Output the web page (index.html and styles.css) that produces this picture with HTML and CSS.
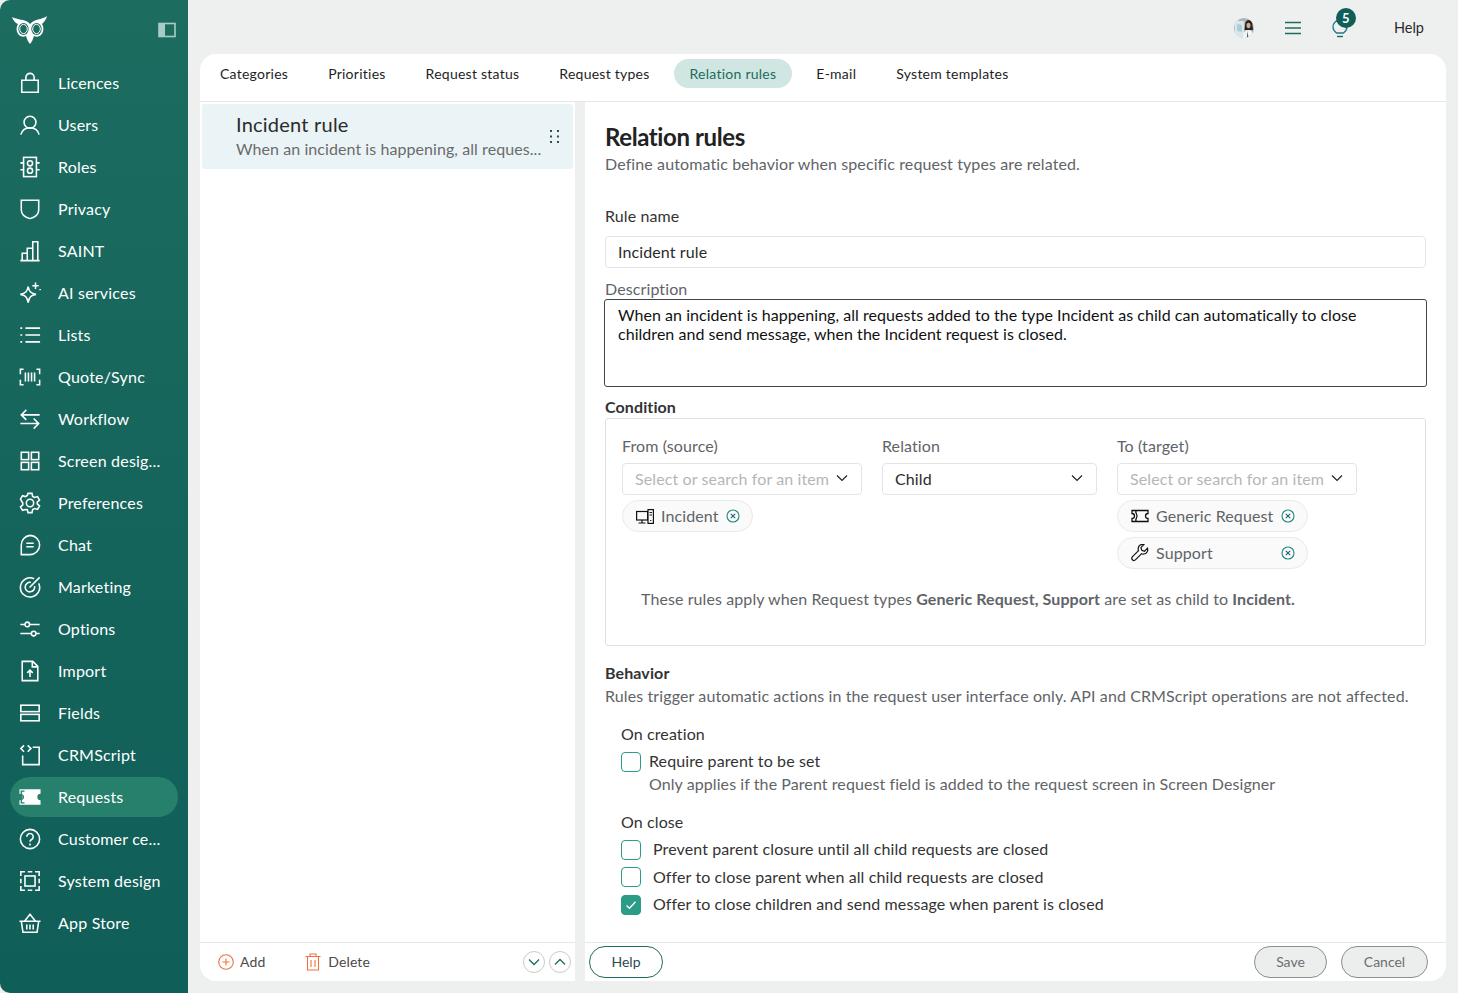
FILE: index.html
```html
<!DOCTYPE html>
<html lang="en">
<head>
  <meta charset="UTF-8">
  <title>Relation rules</title>
  <link rel="stylesheet" href="styles.css">
</head>
<body>
  <div class="app">
    <aside class="sidebar">
      <div class="brand">
        <svg class="owl" viewBox="0 0 36 30" width="36" height="30">
          <path d="M0 2 C6 5 10 4 14 6 C16 7 17 8 18 9 C19 8 20 7 22 6 C26 4 31 4 35 1 C34 5 32 7 30 9 C32 12 32 17 29 20 C27 22 24 22 22 21 C21 24 20 27 18 29 C16 27 15 24 14 21 C12 22 9 22 7 20 C4 17 4 12 6 9 C3 8 1 5 0 2 Z" fill="#fff"/>
          <ellipse cx="11.5" cy="14" rx="5.2" ry="6" fill="#1b6b5e"/>
          <ellipse cx="24.5" cy="14" rx="5.2" ry="6" fill="#1b6b5e"/>
          <ellipse cx="11.5" cy="14" rx="3.8" ry="4.6" fill="none" stroke="#fff" stroke-width="1"/>
          <ellipse cx="24.5" cy="14" rx="3.8" ry="4.6" fill="none" stroke="#fff" stroke-width="1"/>
        </svg>
        <svg class="collapse" viewBox="0 0 18 16" width="18" height="16">
          <rect x="1" y="1.5" width="16" height="13" fill="none" stroke="#a9cdc6" stroke-width="1.6"/>
          <rect x="1" y="1.5" width="6" height="13" fill="#a9cdc6"/>
        </svg>
      </div>
      <nav class="nav">
        <a class="nav-item">
          <svg class="nav-icon" viewBox="0 0 24 24"><path d="M3 9h18v13H3zM7.500 9V6a4.500 4.500 0 0 1 9 0v3"/></svg>
          <span>Licences</span>
        </a>
        <a class="nav-item">
          <svg class="nav-icon" viewBox="0 0 24 24"><circle cx="12" cy="9" r="6.500"/><path d="M2 22.500c1.500-5 5-7.500 10-7.500s8.500 2.500 10 7.500"/></svg>
          <span>Users</span>
        </a>
        <a class="nav-item">
          <svg class="nav-icon" viewBox="0 0 24 24"><rect x="5" y="1.500" width="14" height="21"/><circle cx="12" cy="8" r="2.800"/><circle cx="12" cy="16" r="2.800"/><path d="M1.500 7.500H5M1.500 15H5M19 7.500h3.500M19 15h3.500"/></svg>
          <span>Roles</span>
        </a>
        <a class="nav-item">
          <svg class="nav-icon" viewBox="0 0 24 24"><path d="M2.500 2.500h19V13c0 4.500-4.500 8-9.500 9.500C7 21 2.500 17.500 2.500 13z"/></svg>
          <span>Privacy</span>
        </a>
        <a class="nav-item">
          <svg class="nav-icon" viewBox="0 0 24 24"><path d="M1.500 22.500h21M3.500 22.500v-8h5.500v8M9 22.500V9h6v13.500M15 22.500V2h5.500v20.500"/></svg>
          <span>SAINT</span>
        </a>
        <a class="nav-item">
          <svg class="nav-icon" viewBox="0 0 24 24"><path d="M10 5c1 5.500 3 7.500 8.500 8.500-5.500 1-7.500 3-8.500 9-1-6-3-8-8.500-9 5.500-1 7.500-3 8.500-8.500z"/><path d="M18 .5v7M14.500 4h7M23 7.500v1.500"/></svg>
          <span>AI services</span>
        </a>
        <a class="nav-item">
          <svg class="nav-icon" viewBox="0 0 24 24"><path d="M7 4.500h16M7 12h16M7 19.500h16M1.500 4.500h2M1.500 12h2M1.500 19.500h2"/></svg>
          <span>Lists</span>
        </a>
        <a class="nav-item">
          <svg class="nav-icon" viewBox="0 0 24 24"><path d="M5 3.500H1.500V9M19 3.500h3.500V9M5 20.500H1.500V15M19 20.500h3.500V15M7 7v10M10.300 7v10M13.700 7v10M17 7v10"/></svg>
          <span>Quote/Sync</span>
        </a>
        <a class="nav-item">
          <svg class="nav-icon" viewBox="0 0 24 24"><path d="M22.500 7.500H3M8 2 2.500 7.500 8 13M1.500 17h20M16 11.500l5.500 5.500-5.500 5.500"/></svg>
          <span>Workflow</span>
        </a>
        <a class="nav-item">
          <svg class="nav-icon" viewBox="0 0 24 24"><rect x="2.500" y="2.500" width="8" height="8"/><rect x="13.500" y="2.500" width="8" height="8"/><rect x="2.500" y="13.500" width="8" height="8"/><rect x="13.500" y="13.500" width="8" height="8"/></svg>
          <span>Screen desig...</span>
        </a>
        <a class="nav-item">
          <svg class="nav-icon" viewBox="0 0 24 24"><circle cx="12" cy="12" r="4"/><path d="M9.800 1.500h4.400l.7 3.300 2.100 1.200 3.200-1 2.200 3.800-2.500 2.200v2l2.500 2.200-2.200 3.800-3.200-1-2.100 1.200-.7 3.300H9.800l-.7-3.300L7 19l-3.200 1-2.200-3.800 2.500-2.200v-2L1.600 7.800 3.800 4 7 5l2.100-1.200z"/></svg>
          <span>Preferences</span>
        </a>
        <a class="nav-item">
          <svg class="nav-icon" viewBox="0 0 24 24"><path d="M12 1.500a10.500 10.500 0 1 1 0 21H2.500V12A10.500 10.500 0 0 1 12 1.500zM8 10h8M8 14h8"/></svg>
          <span>Chat</span>
        </a>
        <a class="nav-item">
          <svg class="nav-icon" viewBox="0 0 24 24"><path d="M21.500 8a10.500 10.500 0 1 1-5-5"/><path d="M17 11a5.200 5.200 0 1 1-4-4"/><path d="M11.500 12.500 22.500 1.500"/></svg>
          <span>Marketing</span>
        </a>
        <a class="nav-item">
          <svg class="nav-icon" viewBox="0 0 24 24"><path d="M1.500 7h5M11.500 7h11M1.500 17h12M18.500 17h4"/><circle cx="9" cy="7" r="2.500"/><circle cx="16" cy="17" r="2.500"/></svg>
          <span>Options</span>
        </a>
        <a class="nav-item">
          <svg class="nav-icon" viewBox="0 0 24 24"><path d="M3.500 1.500h11.500l5.500 5.500v15.500h-17zM14.500 1.500v6h6M12 18.500v-7M9 14l3-3 3 3"/></svg>
          <span>Import</span>
        </a>
        <a class="nav-item">
          <svg class="nav-icon" viewBox="0 0 24 24"><rect x="2" y="3.500" width="20" height="7"/><rect x="2" y="13.500" width="20" height="7"/></svg>
          <span>Fields</span>
        </a>
        <a class="nav-item">
          <svg class="nav-icon" viewBox="0 0 24 24"><path d="M15 3.500h7v19H4v-10M5.500 1.500 2 5l3.500 3.500M9.500 1.500 13 5 9.500 8.500"/></svg>
          <span>CRMScript</span>
        </a>
        <a class="nav-item active">
          <svg class="nav-icon" viewBox="0 0 24 24"><path class="solid" d="M.5 3.500h23v5a3.500 3.500 0 0 0 0 7v5H.5v-5a3.500 3.500 0 0 0 0-7z"/><path class="notch" d="M6 5.500H2.500V9a3.500 3.500 0 0 1 2.500 3 3.500 3.500 0 0 1-2.500 3v3.500H6"/></svg>
          <span>Requests</span>
        </a>
        <a class="nav-item">
          <svg class="nav-icon" viewBox="0 0 24 24"><circle cx="12" cy="12" r="10.500"/><path d="M8.500 9.500a3.500 3.500 0 1 1 5.300 3c-1.200.7-1.800 1.300-1.800 2.500M12 17v2"/></svg>
          <span>Customer ce...</span>
        </a>
        <a class="nav-item">
          <svg class="nav-icon" viewBox="0 0 24 24"><path d="M2 6.500V2h4.500M9.500 2h5M17.500 2H22v4.500M22 9.500v5M22 17.500V22h-4.500M14.500 22h-5M6.500 22H2v-4.500M2 14.500v-5"/><rect x="6.500" y="6.500" width="11" height="11"/></svg>
          <span>System design</span>
        </a>
        <a class="nav-item">
          <svg class="nav-icon" viewBox="0 0 24 24"><path d="M.5 10h23M2.500 10l1.800 12h15.400L21.500 10M6 10l6-7.500 6 7.500M8.500 13.500V19M12 13.500V19M15.500 13.500V19"/></svg>
          <span>App Store</span>
        </a>
      </nav>
    </aside>

    <main class="main">
      <header class="topbar">
        <svg class="avatar" viewBox="0 0 20 20" width="20" height="20">
          <clipPath id="avatar-clip"><circle cx="10" cy="10" r="10"/></clipPath>
          <g clip-path="url(#avatar-clip)">
            <rect width="20" height="20" fill="#aab6b8"/>
            <path d="M1 3h9v17H1z" fill="#dbe7ea"/>
            <path d="M3 6l5 1v7l-5-1z" fill="#a8cfd8"/>
            <path d="M11 8c0-4 1.200-6 3.700-6s3.800 2 3.800 6l.5 4h-8.500z" fill="#2a2120"/>
            <ellipse cx="14.500" cy="7.500" rx="2" ry="2.800" fill="#d3a98f"/>
            <path d="M9 20c0-5 1.500-8 5.500-8s4 3 4 8z" fill="#f4f6f6"/>
            <path d="M13.500 13l1 7h-1.500z" fill="#3b4a50"/>
          </g>
        </svg>
        <svg class="menu-icon" viewBox="0 0 16 14" width="16" height="14">
          <path d="M0 1.500h16M0 7h16M0 12.500h16" stroke="#1d6c60" stroke-width="1.300" fill="none"/>
        </svg>
        <div class="bulb">
          <svg viewBox="0 0 16 20" width="16" height="20">
            <path d="M4.500 14C2 12 1 10 1 8a7 7 0 0 1 14 0c0 2-1 4-3.500 6z" fill="none" stroke="#1d7a8c" stroke-width="1.300"/>
            <path d="M5 17.500h6" stroke="#1d6c60" stroke-width="1.400"/>
          </svg>
          <span class="badge">5</span>
        </div>
        <a class="top-help">Help</a>
      </header>

      <section class="card">
        <div class="tabs">
          <a class="tab">Categories</a>
          <a class="tab">Priorities</a>
          <a class="tab">Request status</a>
          <a class="tab">Request types</a>
          <a class="tab active">Relation rules</a>
          <a class="tab">E-mail</a>
          <a class="tab">System templates</a>
        </div>

        <div class="panes">
          <div class="pane list-pane">
            <div class="pane-body">
              <div class="rule-item">
                <div class="rule-text">
                  <div class="rule-title">Incident rule</div>
                  <div class="rule-sub">When an incident is happening, all reques...</div>
                </div>
                <svg class="drag" viewBox="0 0 9 13" width="9" height="13">
                  <g fill="#3c4a4f">
                    <rect x="0" y="0" width="2" height="2"/><rect x="7" y="0" width="2" height="2"/>
                    <rect x="0" y="5.500" width="2" height="2"/><rect x="7" y="5.500" width="2" height="2"/>
                    <rect x="0" y="11" width="2" height="2"/><rect x="7" y="11" width="2" height="2"/>
                  </g>
                </svg>
              </div>
            </div>
            <div class="pane-footer list-footer">
              <a class="tool">
                <svg viewBox="0 0 16 16" width="16" height="16"><circle cx="8" cy="8" r="7.300" fill="none" stroke="#f0703a" stroke-width="1.100"/><path d="M8 4.500v7M4.500 8h7" stroke="#f0703a" stroke-width="1.100"/></svg>
                <span>Add</span>
              </a>
              <a class="tool tool-delete">
                <svg viewBox="0 0 16 18" width="16" height="18"><path d="M.5 3.500h15M2.500 3.500v13.500h11V3.500M5 3.500V1h6v2.500M6 7v7M10 7v7" fill="none" stroke="#f0703a" stroke-width="1.100"/></svg>
                <span>Delete</span>
              </a>
              <div class="arrows">
                <button class="round-btn"><svg viewBox="0 0 12 8" width="12" height="8"><path d="M1 1.500l5 5 5-5" fill="none" stroke="#1d6c60" stroke-width="1.300"/></svg></button>
                <button class="round-btn"><svg viewBox="0 0 12 8" width="12" height="8"><path d="M1 6.500l5-5 5 5" fill="none" stroke="#1d6c60" stroke-width="1.300"/></svg></button>
              </div>
            </div>
          </div>

          <div class="pane form-pane">
            <div class="pane-body form-body">
              <h1 class="page-title">Relation rules</h1>
              <p class="page-sub">Define automatic behavior when specific request types are related.</p>

              <label class="field-label rule-label">Rule name</label>
              <div class="input">Incident rule</div>

              <label class="field-label desc-label">Description</label>
              <div class="textarea">When an incident is happening, all requests added to the type Incident as child can automatically to close children and send message, when the Incident request is closed.</div>

              <div class="section-label">Condition</div>
              <div class="condition">
                <div class="cond-col col-from">
                  <div class="cond-label">From (source)</div>
                  <div class="select placeholder">Select or search for an item
                    <svg class="chev" viewBox="0 0 12 8" width="12" height="8"><path d="M1 1.500l5 5 5-5" fill="none" stroke="#222" stroke-width="1.200"/></svg>
                  </div>
                  <div class="chip chip-short">
                    <svg viewBox="0 0 18 15" width="18" height="15"><g fill="none" stroke="#111" stroke-width="1.200"><rect x=".6" y="2.500" width="11" height="8.500"/><path d="M2.500 14h7M6 11v3"/><rect x="12" y=".6" width="5.400" height="13.800" fill="#fafafa"/><path d="M13.500 3.500h2.500M13.500 6h2.500M14.700 11v1"/></g></svg>
                    <span>Incident</span>
                    <svg class="chip-x" viewBox="0 0 14 14" width="14" height="14"><circle cx="7" cy="7" r="6" fill="none" stroke="#1f8a7c" stroke-width="1.100"/><path d="M4.800 4.800l4.400 4.400M9.200 4.800l-4.400 4.400" stroke="#1f5f7a" stroke-width="1.100"/></svg>
                  </div>
                </div>
                <div class="cond-col col-rel">
                  <div class="cond-label">Relation</div>
                  <div class="select">Child
                    <svg class="chev" viewBox="0 0 12 8" width="12" height="8"><path d="M1 1.500l5 5 5-5" fill="none" stroke="#222" stroke-width="1.200"/></svg>
                  </div>
                </div>
                <div class="cond-col col-to">
                  <div class="cond-label">To (target)</div>
                  <div class="select placeholder">Select or search for an item
                    <svg class="chev" viewBox="0 0 12 8" width="12" height="8"><path d="M1 1.500l5 5 5-5" fill="none" stroke="#222" stroke-width="1.200"/></svg>
                  </div>
                  <div class="chip chip-wide">
                    <svg viewBox="0 0 18 14" width="18" height="14"><path d="M1 1.500h16v3a2.500 2.500 0 0 0 0 5v3H1v-3a2.500 2.500 0 0 0 0-5zM5.500 1.500c-1 1-1 2-.2 3 .9 1.500.9 3.500 0 5-.8 1-.8 2 .2 3" fill="none" stroke="#111" stroke-width="1.300"/></svg>
                    <span>Generic Request</span>
                    <svg class="chip-x" viewBox="0 0 14 14" width="14" height="14"><circle cx="7" cy="7" r="6" fill="none" stroke="#1f8a7c" stroke-width="1.100"/><path d="M4.800 4.800l4.400 4.400M9.200 4.800l-4.400 4.400" stroke="#1f5f7a" stroke-width="1.100"/></svg>
                  </div>
                  <div class="chip chip-wide">
                    <svg viewBox="0 0 18 18" width="18" height="18"><path d="M16.500 4.200l-3 3-2.700-.9-.9-2.700 3-3c-2.500-.8-5.500.8-5.700 3.700-.1.900 0 1.600.3 2.300L1.300 12.800a2.200 2.200 0 0 0 3.100 3.100L10.600 9.700c.7.300 1.500.4 2.300.3 2.900-.2 4.400-3.200 3.600-5.800z" fill="none" stroke="#111" stroke-width="1.200"/></svg>
                    <span>Support</span>
                    <svg class="chip-x" viewBox="0 0 14 14" width="14" height="14"><circle cx="7" cy="7" r="6" fill="none" stroke="#1f8a7c" stroke-width="1.100"/><path d="M4.800 4.800l4.400 4.400M9.200 4.800l-4.400 4.400" stroke="#1f5f7a" stroke-width="1.100"/></svg>
                  </div>
                </div>
                <p class="cond-note">These rules apply when Request types <b>Generic Request, Support</b> are set as child to <b>Incident.</b></p>
              </div>

              <div class="section-label behavior-label">Behavior</div>
              <p class="behavior-sub">Rules trigger automatic actions in the request user interface only. API and CRMScript operations are not affected.</p>

              <div class="group-label first-group">On creation</div>
              <div class="check-row require-row">
                <span class="checkbox"></span>
                <span class="check-text">Require parent to be set</span>
              </div>
              <p class="check-help">Only applies if the Parent request field is added to the request screen in Screen Designer</p>

              <div class="group-label close-group">On close</div>
              <div class="check-row wide-row">
                <span class="checkbox"></span>
                <span class="check-text">Prevent parent closure until all child requests are closed</span>
              </div>
              <div class="check-row wide-row">
                <span class="checkbox"></span>
                <span class="check-text">Offer to close parent when all child requests are closed</span>
              </div>
              <div class="check-row wide-row">
                <span class="checkbox checked">
                  <svg viewBox="0 0 12 10" width="12" height="10"><path d="M1.500 5.500l3 2.800 6-6.500" fill="none" stroke="#fff" stroke-width="1.300"/></svg>
                </span>
                <span class="check-text">Offer to close children and send message when parent is closed</span>
              </div>
            </div>
            <div class="pane-footer form-footer">
              <button class="btn btn-help">Help</button>
              <div class="footer-right">
                <button class="btn btn-muted btn-save">Save</button>
                <button class="btn btn-muted btn-cancel">Cancel</button>
              </div>
            </div>
          </div>
        </div>
      </section>
    </main>
  </div>
</body>
</html>
```

FILE: styles.css
```css
* {
  box-sizing: border-box;
}

html, body {
  height: 100%;
}

body {
  margin: 0;
  font-family: Lato, "Open Sans", sans-serif;
  font-size: 16px;
  letter-spacing: .11px;
  color: #2b2b2b;
  background-color: #eef0ef;
  overflow: hidden;
}

a {
  color: inherit;
  text-decoration: none;
}

p, h1 {
  margin: 0;
}

.app {
  display: flex;
  height: 993px;
}

/* sidebar */
.sidebar {
  width: 188px;
  flex-shrink: 0;
  padding: 15px 10px 0;
  background: linear-gradient(180deg, #1c6c60 0%, #0f5e58 100%);
  border-radius: 10px 0 0 10px;
}

.brand {
  display: flex;
  justify-content: space-between;
  align-items: center;
  height: 30px;
  margin-bottom: 18px;
  padding: 0 2px;
}

.nav {
  display: flex;
  flex-direction: column;
  gap: 2px;
}

.nav-item {
  display: flex;
  align-items: center;
  gap: 17px;
  height: 40px;
  padding-left: 9px;
  border-radius: 20px;
  color: #fff;
  font-size: 16px;
  letter-spacing: .2px;
  white-space: nowrap;
}

.nav-item span {
  padding-bottom: 2px;
}

.nav-item.active {
  background-color: #26806c;
}

.nav-icon {
  width: 22px;
  height: 22px;
  flex-shrink: 0;
  overflow: visible;
  fill: none;
  stroke: #fff;
  stroke-width: 1.700;
}

.nav-icon .solid {
  fill: #fff;
  stroke: none;
}

.nav-icon .notch {
  stroke: #26806c;
  stroke-width: 1.400;
}

/* top bar */
.main {
  flex: 1;
  display: flex;
  flex-direction: column;
  min-width: 0;
  padding: 0 12px 12px;
}

.topbar {
  display: flex;
  align-items: center;
  justify-content: flex-end;
  height: 54px;
  flex-shrink: 0;
  padding-right: 22px;
}

.avatar {
  margin: 2px 31px 0 0;
}

.menu-icon {
  margin: 2px 31px 0 0;
}

.bulb {
  position: relative;
  width: 16px;
  height: 20px;
  margin: 4px 46px 0 0;
}

.badge {
  position: absolute;
  top: -11px;
  left: 4px;
  width: 20px;
  height: 20px;
  border-radius: 50%;
  background-color: #0f5e58;
  color: #fff;
  font-size: 13px;
  font-weight: 700;
  line-height: 20px;
  text-align: center;
}

.top-help {
  font-size: 14.500px;
  letter-spacing: 0;
}

/* card + tabs */
.card {
  flex: 1;
  display: flex;
  flex-direction: column;
  min-height: 0;
  border-radius: 16px;
  overflow: hidden;
}

.tabs {
  display: flex;
  gap: 8px;
  height: 48px;
  flex-shrink: 0;
  padding: 5px 0 0 4px;
  background-color: #fff;
  border-bottom: 1px solid #e6e8e8;
}

.tab {
  height: 29px;
  padding: 0 16px;
  border-radius: 15px;
  font-size: 14px;
  letter-spacing: .25px;
  line-height: 29px;
  color: #1e1e1e;
}

.tab.active {
  background-color: #cfe6e2;
  color: #1d6c60;
}

.panes {
  flex: 1;
  display: flex;
  gap: 10px;
  min-height: 0;
}

.pane {
  display: flex;
  flex-direction: column;
  background-color: #fff;
}

.list-pane {
  width: 375px;
  flex-shrink: 0;
}

.form-pane {
  flex: 1;
  min-width: 0;
}

.pane-body {
  flex: 1;
  min-height: 0;
}

.pane-footer {
  display: flex;
  align-items: center;
  height: 39px;
  flex-shrink: 0;
  border-top: 1px solid #e6e8e8;
}

/* rule list */
.rule-item {
  display: flex;
  align-items: center;
  justify-content: space-between;
  height: 65px;
  margin: 2px 2px 0;
  padding: 0 14px 0 34px;
  background-color: #eaf4f7;
  border-radius: 3px;
}

.rule-text {
  padding-bottom: 2px;
}

.rule-title {
  font-size: 20px;
  letter-spacing: .22px;
  line-height: 26px;
  color: #2b2b2b;
}

.rule-sub {
  margin-top: 1px;
  font-size: 16px;
  letter-spacing: .07px;
  line-height: 22px;
  color: #6b6b6b;
}

.list-footer {
  padding: 0 4px 0 18px;
  font-size: 14px;
  color: #4a4a4a;
}

.tool {
  display: flex;
  align-items: center;
  gap: 6px;
}

.tool span {
  padding-bottom: 2px;
}

.tool-delete {
  margin-left: 40px;
}

.tool-delete svg {
  margin-right: 1px;
}

.arrows {
  display: flex;
  gap: 4px;
  margin-left: auto;
}

.round-btn {
  display: flex;
  align-items: center;
  justify-content: center;
  width: 22px;
  height: 22px;
  padding: 0;
  border: 1px solid #c8cccc;
  border-radius: 50%;
  background-color: #fff;
}

/* form */
.form-body {
  padding: 20px 20px 0;
}

.page-title {
  font-size: 24px;
  font-weight: 700;
  letter-spacing: -.4px;
  line-height: 30px;
  color: #222;
}

.page-sub {
  font-size: 16px;
  line-height: 24px;
  color: #5f6468;
}

.field-label {
  display: block;
  font-size: 16px;
  line-height: 20px;
  color: #333;
}

.rule-label {
  margin-top: 30px;
}

.input {
  height: 32px;
  margin-top: 10px;
  padding: 0 12px;
  border: 1px solid #e3e5e5;
  border-radius: 4px;
  line-height: 29px;
}

.desc-label {
  margin-top: 11px;
  color: #5f6468;
}

.textarea {
  height: 88px;
  margin: 0 -1px;
  padding: 5px 13px;
  border: 1px solid #444;
  border-radius: 3px;
  letter-spacing: .04px;
  line-height: 19px;
  color: #111;
}

.section-label {
  font-size: 16px;
  font-weight: 700;
  line-height: 20px;
  color: #333;
}

.condition {
  display: grid;
  grid-template-columns: 240px 215px 240px;
  column-gap: 20px;
  align-items: start;
  height: 228px;
  margin-top: 1px;
  padding: 15px 16px;
  border: 1px solid #e0e2e2;
  border-radius: 3px;
  align-content: start;
}

.section-label:not(.behavior-label) {
  margin-top: 10px;
}

.cond-col {
  display: flex;
  flex-direction: column;
  min-height: 119px;
  gap: 5px;
}

.cond-label {
  padding-bottom: 2px;
  font-size: 16px;
  line-height: 23px;
  color: #5f6468;
}

.select {
  display: flex;
  align-items: center;
  justify-content: space-between;
  height: 32px;
  margin-top: -1px;
  padding: 0 13px 2px 12px;
  border: 1px solid #e3e5e5;
  border-radius: 4px;
  white-space: nowrap;
}

.select.placeholder {
  color: #b4b7b8;
}

.chip {
  display: flex;
  align-items: center;
  height: 32px;
  padding: 0 12px 0 13px;
  border: 1px solid #eaeaea;
  border-radius: 16px;
  background-color: #fafafa;
  color: #5f6468;
}

.chip span {
  padding-bottom: 2px;
}

.chip svg:first-child {
  flex-shrink: 0;
  margin-right: 7px;
}

.chip-short {
  width: 131px;
}

.chip-wide {
  width: 191px;
}

.chip-x {
  margin-left: auto;
}

.cond-note {
  grid-column: 1 / 4;
  margin-top: 18px;
  padding-left: 19px;
  font-size: 16px;
  letter-spacing: .09px;
  line-height: 24px;
  color: #5f6468;
}

.cond-note b {
  font-weight: 700;
}

.behavior-label {
  margin-top: 17px;
}

.behavior-sub {
  margin-top: 1px;
  line-height: 24px;
  color: #5f6468;
}

.group-label {
  padding-left: 16px;
  line-height: 24px;
  color: #333;
}

.first-group {
  margin-top: 14px;
}

.close-group {
  margin-top: 14px;
}

.check-row {
  display: flex;
  align-items: center;
  padding-left: 16px;
  color: #333;
}

.check-text {
  padding-bottom: 2px;
}

.require-row {
  gap: 8px;
  margin-top: 5px;
}

.wide-row {
  gap: 12px;
  height: 27.500px;
}

.close-group + .wide-row {
  margin-top: 2px;
}

.check-help {
  padding-left: 44px;
  letter-spacing: .08px;
  line-height: 24px;
  color: #5f6468;
}

.checkbox {
  display: flex;
  align-items: center;
  justify-content: center;
  width: 20px;
  height: 20px;
  flex-shrink: 0;
  border: 1px solid #2b9c86;
  border-radius: 4px;
}

.checkbox.checked {
  background-color: #2b9c86;
}

/* footer buttons */
.form-footer {
  justify-content: space-between;
  padding: 0 18px 0 4px;
}

.footer-right {
  display: flex;
  gap: 14px;
}

.btn {
  height: 32px;
  border-radius: 16px;
  font-family: inherit;
  font-size: 14px;
  background-color: #fff;
}

.btn-help {
  width: 74px;
  border: 1px solid #1d6c60;
  padding-bottom: 3px;
  color: #2b4a52;
}

.btn-muted {
  padding-bottom: 3px;
  border: 1px solid #8a8f8f;
  background-color: #eceeee;
  color: #6b6f70;
}

.btn-save {
  width: 73px;
}

.btn-cancel {
  width: 87px;
}
```
